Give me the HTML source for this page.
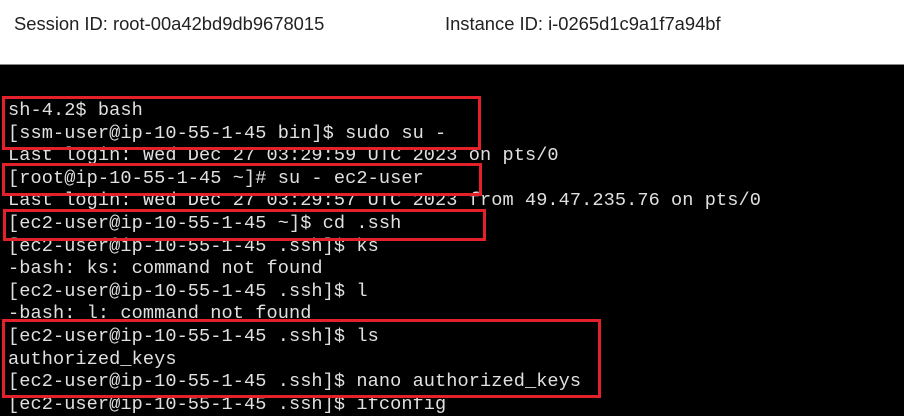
<!DOCTYPE html>
<html><head><meta charset="utf-8"><style>
html,body{margin:0;padding:0;width:904px;height:402px;overflow:hidden;background:#000}
.hdr{position:absolute;left:0;top:0;width:904px;height:64px;background:#fff;border-bottom:1px solid #888;font-family:"Liberation Sans",sans-serif;font-size:18px;color:#222}
.hdr span{position:absolute;top:14px;white-space:nowrap;transform-origin:0 0;transform:scaleX(1.02)}
.term{position:absolute;left:8px;top:100px;font-family:"Liberation Mono",monospace;font-size:18.6px;line-height:22.6px;letter-spacing:0.08px;color:#e0e0e0;white-space:pre}
.box{position:absolute;border:3px solid #e4202b;box-sizing:border-box}
</style></head><body>
<div class="hdr"><span style="left:14px">Session ID: root-00a42bd9db9678015</span><span style="left:445px">Instance ID: i-0265d1c9a1f7a94bf</span></div>
<div class="term">sh-4.2$ bash
[ssm-user@ip-10-55-1-45 bin]$ sudo su -
Last login: Wed Dec 27 03:29:59 UTC 2023 on pts/0
[root@ip-10-55-1-45 ~]# su - ec2-user
Last login: Wed Dec 27 03:29:57 UTC 2023 from 49.47.235.76 on pts/0
[ec2-user@ip-10-55-1-45 ~]$ cd .ssh
[ec2-user@ip-10-55-1-45 .ssh]$ ks
-bash: ks: command not found
[ec2-user@ip-10-55-1-45 .ssh]$ l
-bash: l: command not found
[ec2-user@ip-10-55-1-45 .ssh]$ ls
authorized_keys
[ec2-user@ip-10-55-1-45 .ssh]$ nano authorized_keys
[ec2-user@ip-10-55-1-45 .ssh]$ ifconfig</div>
<div class="box" style="left:2px;top:96px;width:479px;height:54px"></div>
<div class="box" style="left:2px;top:163px;width:480px;height:33px"></div>
<div class="box" style="left:3px;top:209px;width:483px;height:32px"></div>
<div class="box" style="left:2px;top:319px;width:599px;height:79px"></div>
</body></html>
